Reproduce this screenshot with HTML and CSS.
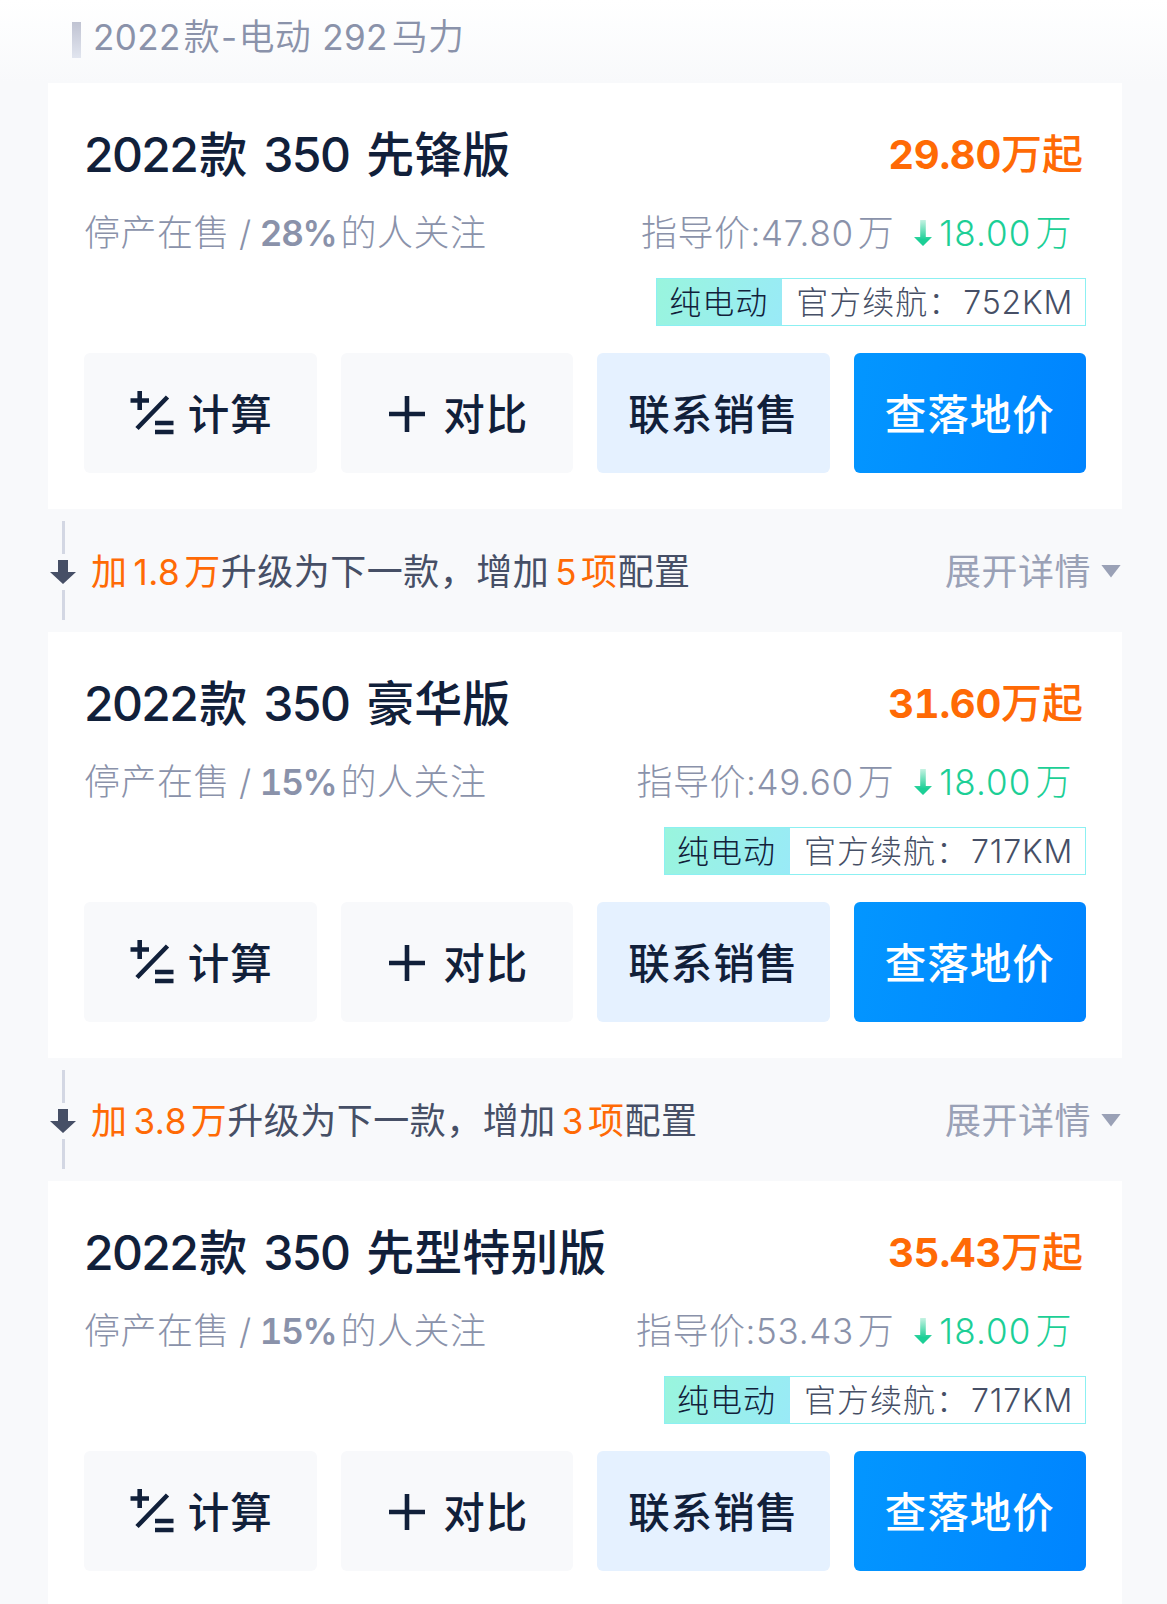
FILE: index.html
```
<!DOCTYPE html>
<html lang="zh-CN">
<head>
<meta charset="utf-8">
<title>2022款-电动 292马力</title>
<link rel="stylesheet" href="styles.css">
</head>
<body>
<svg width="0" height="0" class="defs" aria-hidden="true">
  <defs>
    <linearGradient id="drop" x1="0" y1="0" x2="0" y2="1"><stop offset="0" stop-color="#c5f2e2"/><stop offset=".75" stop-color="#1ccf96"/></linearGradient>
    <symbol id="i-drop" viewBox="0 0 18 26"><path fill="url(#drop)" d="M6.2 0h5.6v17H18l-9 9-9-9h6.2z"/></symbol>
    <symbol id="i-calc" viewBox="0 0 44 44"><path fill="none" stroke="#11203a" stroke-width="4.600" d="M.5 9.500h18.500M9.700 0v19M7 37.500 37.500 6M25 32h18.500M25 41h18.500"/></symbol>
    <symbol id="i-plus" viewBox="0 0 38 38"><path fill="none" stroke="#11203a" stroke-width="4.600" d="M1 19h36M19 1v36"/></symbol>
    <symbol id="i-down" viewBox="0 0 26 24"><path fill="#464f66" d="M8 0h10v12h8L13 24 0 12h8z"/></symbol>
  </defs>
</svg>
<header class="group"><i class="bar"></i><div><span class="n">2022</span>款<span class="n dash">-</span>电动<span class="n hp">292</span>马力</div></header>
<main class="list">
  <section class="card">
    <div class="row head"><h2><span class="n">2022</span>款<span class="n model">350</span>先锋版</h2><div class="price"><span class="n">29.80</span>万起</div></div>
    <div class="row sub"><div class="sale">停产在售<span class="n slash">/</span><b class="n">28%</b>的人关注</div><div class="guide">指导价<span class="n">:47.80</span>万<svg class="drop"><use href="#i-drop"/></svg><span class="cut"><span class="n">18.00</span>万</span></div></div>
    <div class="tag"><span class="kind">纯电动</span><span class="range">官方续航：<span class="n">752KM</span></span></div>
    <div class="acts"><a class="btn"><svg class="calc"><use href="#i-calc"/></svg>计算</a><a class="btn"><svg class="plus"><use href="#i-plus"/></svg>对比</a><a class="btn sales">联系销售</a><a class="btn ask">查落地价</a></div>
  </section>
  <div class="step">
    <div class="rail"><i></i><svg><use href="#i-down"/></svg><i></i></div>
    <div class="diff"><em>加<span class="n">1.8</span>万</em>升级为下一款，增加<em><span class="n count">5</span>项</em>配置</div>
    <div class="more"><span>展开详情</span><i></i></div>
  </div>
  <section class="card">
    <div class="row head"><h2><span class="n">2022</span>款<span class="n model">350</span>豪华版</h2><div class="price"><span class="n">31.60</span>万起</div></div>
    <div class="row sub"><div class="sale">停产在售<span class="n slash">/</span><b class="n">15%</b>的人关注</div><div class="guide">指导价<span class="n">:49.60</span>万<svg class="drop"><use href="#i-drop"/></svg><span class="cut"><span class="n">18.00</span>万</span></div></div>
    <div class="tag"><span class="kind">纯电动</span><span class="range">官方续航：<span class="n">717KM</span></span></div>
    <div class="acts"><a class="btn"><svg class="calc"><use href="#i-calc"/></svg>计算</a><a class="btn"><svg class="plus"><use href="#i-plus"/></svg>对比</a><a class="btn sales">联系销售</a><a class="btn ask">查落地价</a></div>
  </section>
  <div class="step">
    <div class="rail"><i></i><svg><use href="#i-down"/></svg><i></i></div>
    <div class="diff"><em>加<span class="n">3.8</span>万</em>升级为下一款，增加<em><span class="n count">3</span>项</em>配置</div>
    <div class="more"><span>展开详情</span><i></i></div>
  </div>
  <section class="card">
    <div class="row head"><h2><span class="n">2022</span>款<span class="n model">350</span>先型特别版</h2><div class="price"><span class="n">35.43</span>万起</div></div>
    <div class="row sub"><div class="sale">停产在售<span class="n slash">/</span><b class="n">15%</b>的人关注</div><div class="guide">指导价<span class="n">:53.43</span>万<svg class="drop"><use href="#i-drop"/></svg><span class="cut"><span class="n">18.00</span>万</span></div></div>
    <div class="tag"><span class="kind">纯电动</span><span class="range">官方续航：<span class="n">717KM</span></span></div>
    <div class="acts"><a class="btn"><svg class="calc"><use href="#i-calc"/></svg>计算</a><a class="btn"><svg class="plus"><use href="#i-plus"/></svg>对比</a><a class="btn sales">联系销售</a><a class="btn ask">查落地价</a></div>
  </section>
</main>
</body>
</html>
```

FILE: styles.css
```
* { box-sizing: border-box; }
html { overflow: hidden; }
body {
  margin: 0;
  height: 1604px;
  overflow: hidden;
  background: #f8f9fb;
  color: #11203a;
  font-family: "Noto Sans CJK SC", sans-serif;
  font-size: 36px;
  white-space: nowrap;
}
i, em { font-style: normal; }
svg { display: block; flex: none; }
.defs { position: absolute; }
.n { font-family: Inter, sans-serif; line-height: 1; }

.group {
  display: flex;
  height: 83px;
  padding-left: 72px;
  line-height: 68px;
  background: linear-gradient(#fff, #f8f9fb);
  color: #8a92aa;
  font-weight: 350;
  letter-spacing: .3px;
}
.group .n { font-size: 35px; letter-spacing: .4px; margin-right: 3px; font-weight: 400; }
.group .dash { margin: 0 1px; }
.group .hp { margin-left: 11px; margin-right: 4px; }
.bar { width: 9px; height: 36px; margin: 22px 12px 0 0; background: linear-gradient(#c0c3d2, #e1e5ef); }

.list { padding: 0 45px 0 48px; }
.card { height: 426px; padding: 36px 36px 36px 36px; background: #fff; }
.row { display: flex; justify-content: space-between; }
.head { height: 72px; }
h2 { margin: 0; font-size: 48px; font-weight: 500; line-height: 64px; }
h2 .n { letter-spacing: -1.6px; margin-right: 2px; font-weight: 500; font-size: 48px; }
h2 .model { margin: 0 17px 0 16px; }
.price { line-height: 65px; padding-right: 3px; color: #ff6a05; font-size: 41px; font-weight: 500; }
.price .n { font-weight: 650; font-size: 40px; font-variant-numeric: tabular-nums; letter-spacing: -.3px; }
.sub { height: 84px; line-height: 78px; color: #8a92aa; font-weight: 300; letter-spacing: .5px; }
.sub .n { font-size: 35px; }
.sub .slash { margin: 0 8px 0 9px; }
.sale b.n { margin-right: 4px; font-weight: 600; font-variant-numeric: tabular-nums; letter-spacing: -1.2px; }
.guide { padding-right: 14px; }
.guide .n { margin-right: 4px; letter-spacing: .7px; }
.drop { display: inline-block; width: 18px; height: 26px; margin: 0 7px 0 20px; vertical-align: baseline; }
.cut { color: #1ccf96; }
.cut .n { letter-spacing: 1.1px; }

.tag { display: flex; width: max-content; height: 48px; margin: 3px 0 27px auto; border: 1px solid #8cf0f2; font-size: 32px; line-height: 43px; letter-spacing: 1px; font-weight: 300; color: #464f66; }
.kind { width: 125px; padding-left: 12px; background: linear-gradient(110deg, #99f5dd, #99eaf7); color: #11203a; }
.range { padding: 0 12px 0 14px; }
.range .n { margin-left: 2px; font-size: 32px; letter-spacing: .8px; }

.acts { display: grid; grid-template-columns: repeat(4, 1fr); gap: 24px; }
.btn { display: flex; align-items: center; justify-content: center; height: 120px; padding-bottom: 2px; border-radius: 6px; background: #f8f9fb; font-size: 41.500px; font-weight: 500; letter-spacing: 1px; }
.sales { background: #e5f1ff; }
.ask { background: linear-gradient(100deg, #0396ff, #0084ff); color: #fff; }
.calc { width: 44px; height: 44px; margin: 2px 14px 0 2px; }
.plus { width: 38px; height: 38px; margin: 4px 17px 0 3px; }

.step { display: flex; align-items: center; height: 123px; color: #464f66; }
.rail { display: flex; flex-direction: column; align-items: center; width: 26px; margin: 0 15px 0 2px; }
.rail i { width: 3px; height: 33px; background: #d3d7e3; }
.rail i:last-child { height: 30px; }
.rail svg { width: 26px; height: 24px; margin: 6px 0; }
.diff { flex: 1; padding-bottom: 4px; letter-spacing: .5px; }
.diff em { color: #ff6a05; }
.diff .n { font-size: 35px; margin: 0 4px 0 6px; }
.diff .count { margin-right: 4px; }
.more { display: flex; align-items: center; color: #9aa1b6; letter-spacing: .5px; }
.more span { padding-bottom: 4px; }
.more i { width: 20px; height: 13px; margin: 1px 1px 0 10px; background: #9aa1b6; clip-path: polygon(0 0, 100% 0, 50% 100%); }
```
